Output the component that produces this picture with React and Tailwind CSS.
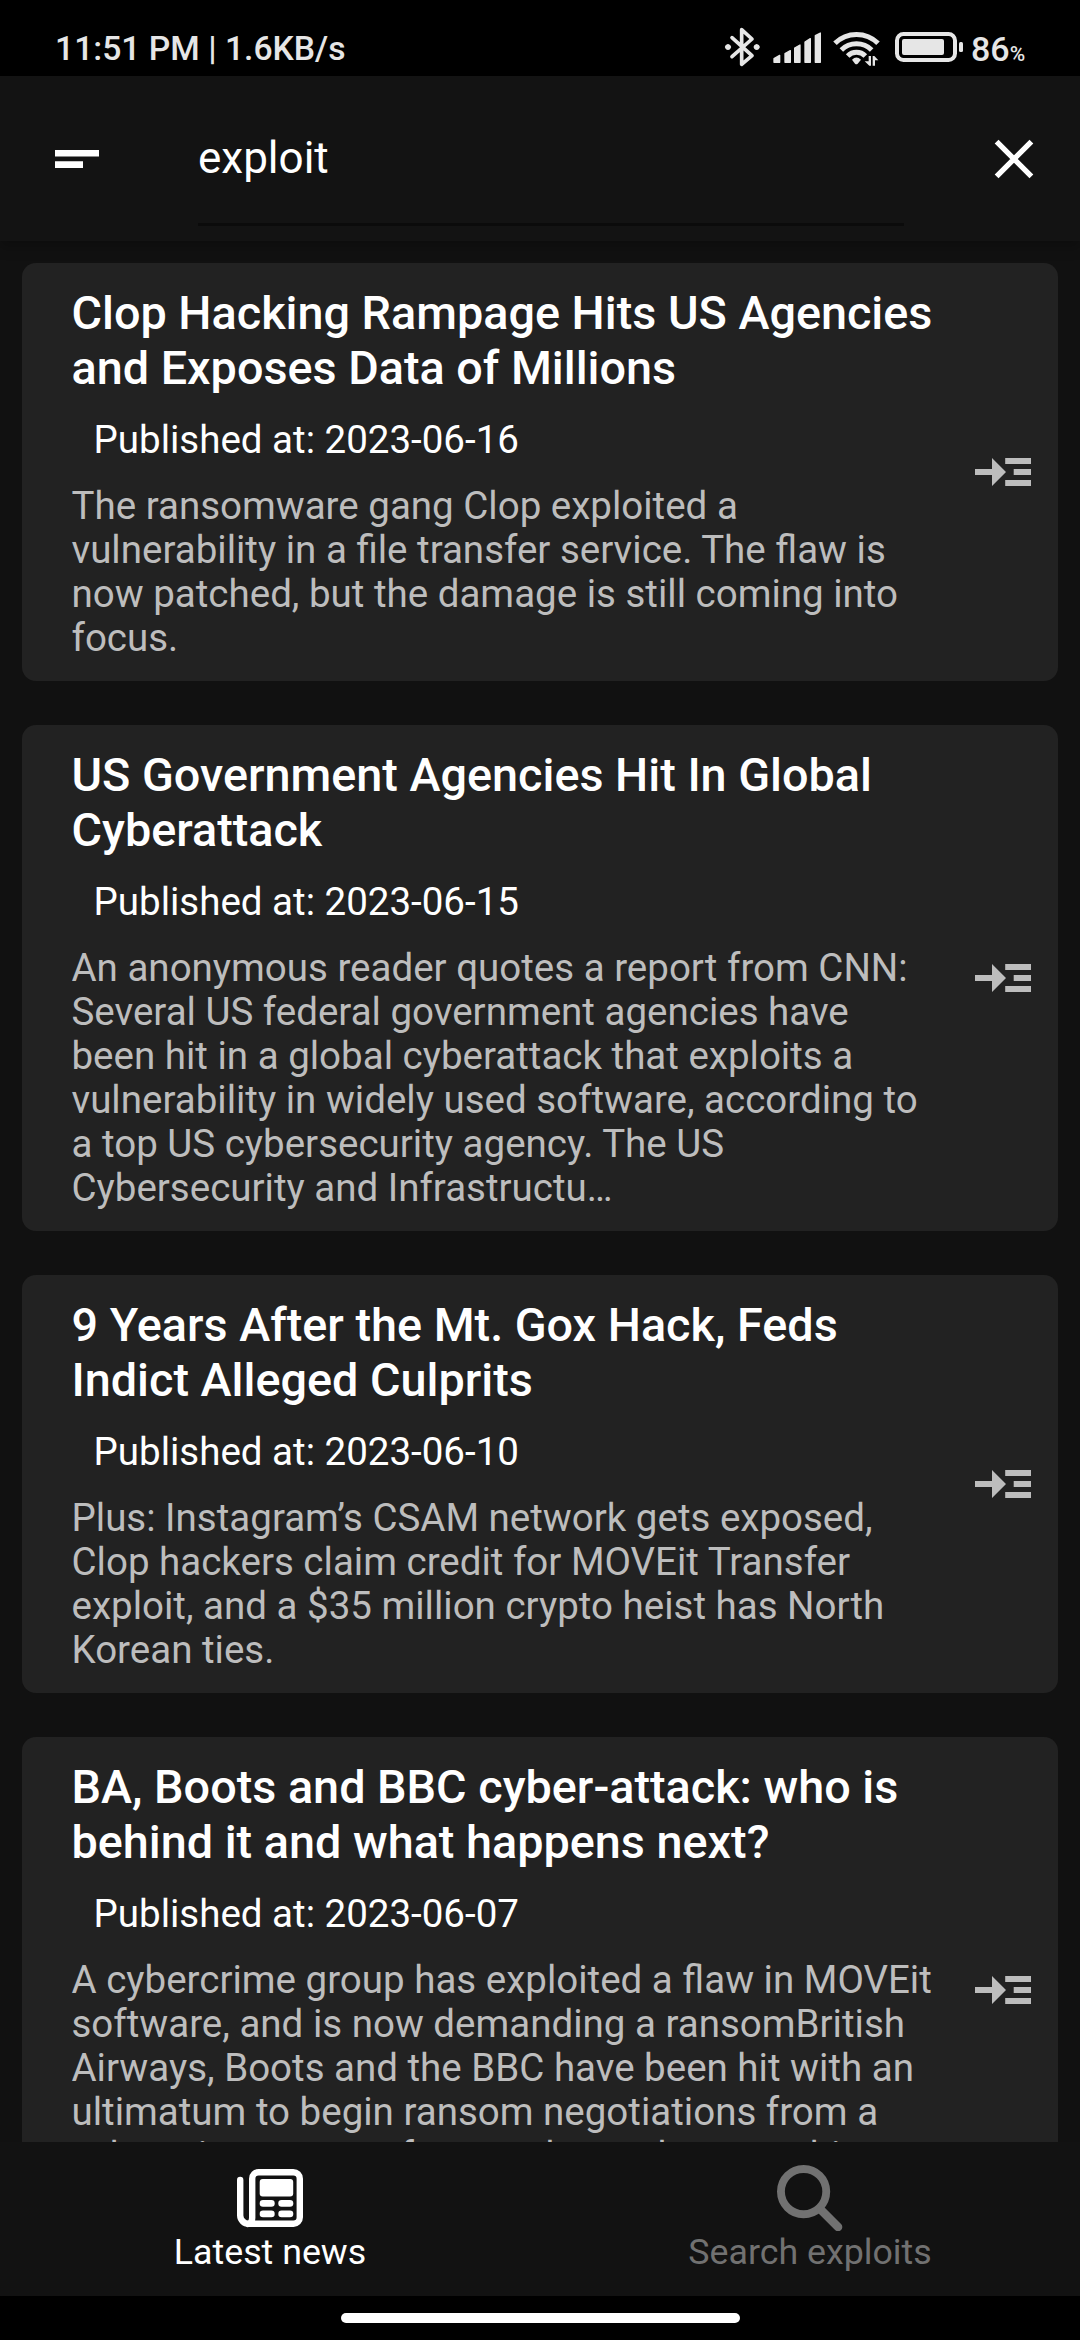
import React from "react";

const articles = [
  {
    title: "Clop Hacking Rampage Hits US Agencies and Exposes Data of Millions",
    date: "2023-06-16",
    body: "The ransomware gang Clop exploited a vulnerability in a file transfer service. The flaw is now patched, but the damage is still coming into focus.",
  },
  {
    title: "US Government Agencies Hit In Global Cyberattack",
    date: "2023-06-15",
    body: "An anonymous reader quotes a report from CNN: Several US federal government agencies have been hit in a global cyberattack that exploits a vulnerability in widely used software, according to a top US cybersecurity agency. The US Cybersecurity and Infrastructu…",
  },
  {
    title: "9 Years After the Mt. Gox Hack, Feds Indict Alleged Culprits",
    date: "2023-06-10",
    body: "Plus: Instagram’s CSAM network gets exposed, Clop hackers claim credit for MOVEit Transfer exploit, and a $35 million crypto heist has North Korean ties.",
  },
  {
    title: "BA, Boots and BBC cyber-attack: who is behind it and what happens next?",
    date: "2023-06-07",
    body: "A cybercrime group has exploited a flaw in MOVEit software, and is now demanding a ransomBritish Airways, Boots and the BBC have been hit with an ultimatum to begin ransom negotiations from a cybercrime group after employee data was hit. Organisations…",
  },
];

function BluetoothIcon() {
  return (
    <svg className="h-10 w-[37px]" viewBox="26 20 111 120" fill="none" stroke="currentColor" strokeWidth="11" strokeLinejoin="round" strokeLinecap="round">
      <path d="M50 52 110 106 79 132V28L110 56 50 109" />
      <path d="M28 80 38 71 48 80 38 89ZM114 80 124 71 134 80 124 89Z" fill="currentColor" stroke="none" />
      <circle cx="38" cy="80" r="8.5" fill="currentColor" stroke="none" />
      <circle cx="124" cy="80" r="8.5" fill="currentColor" stroke="none" />
    </svg>
  );
}

function SignalIcon() {
  return (
    <svg className="h-[31px] w-12" viewBox="174 36 144 93" fill="currentColor" stroke="currentColor" strokeWidth="4" strokeLinejoin="round">
      <path d="M177 116 194 106V127H177ZM210 101 226 92V127H210ZM239 84 255 75V127H239ZM270 66 286 56V127H270ZM301 47 316 39V127H301Z" />
    </svg>
  );
}

function WifiIcon() {
  return (
    <svg className="h-9 w-[47px]" viewBox="355 30 141 108" fill="none" stroke="currentColor" strokeWidth="15">
      <path d="M361 70A92 92 0 0 1 490 70" />
      <path d="M380 90A65 65 0 0 1 471 90" />
      <path d="M399 108A37 37 0 0 1 452 108" />
      <path d="M412 119Q425 106 439 119L429 131Q425 135 421 131Z" fill="currentColor" stroke="none" />
      <path d="M462 108H469V137H464L450 124H462ZM474 108H479L491 121H481V137H474Z" fill="currentColor" stroke="none" />
    </svg>
  );
}

function BatteryIcon() {
  return (
    <svg className="h-[30px] w-[68px]" viewBox="0 0 68 30" fill="currentColor">
      <rect x="2" y="2" width="58" height="26" rx="6.5" fill="none" stroke="currentColor" strokeWidth="4" />
      <rect x="7" y="7" width="42" height="16" rx="2" />
      <rect x="64" y="10" width="4" height="10" rx="1.5" />
    </svg>
  );
}

function ReadMoreIcon() {
  return (
    <svg className="h-7 w-14 shrink-0" viewBox="0 0 56 28" fill="#bdbdbd">
      <path d="M0 11H17V0L31 14 17 28V17H0ZM30.2 0H56V6H30.2ZM38.7 11H56V17H38.7ZM30.2 22H56V28H30.2Z" />
    </svg>
  );
}

function NewsIcon() {
  return (
    <svg className="size-[66px]" viewBox="17 15 66 66" fill="none" stroke="currentColor" strokeWidth="6.4" strokeLinecap="round">
      <path d="M20.2 30V65.5A8.5 8.5 0 0 0 28.7 73.8H73.5A6.5 6.5 0 0 0 79.8 67.3V28.7A6.5 6.5 0 0 0 73.3 22.2H38.7A6.5 6.5 0 0 0 32.2 28.7V68Q32.2 73 28 74" />
      <g fill="currentColor" stroke="none">
        <rect x="39.7" y="29" width="33.5" height="17.4" rx="3" />
        <rect x="39.7" y="50" width="15" height="6.7" rx="3.3" />
        <rect x="58.3" y="50" width="15" height="6.7" rx="3.3" />
        <rect x="39.7" y="60.6" width="15" height="6.7" rx="3.3" />
        <rect x="58.3" y="60.6" width="15" height="6.7" rx="3.3" />
      </g>
    </svg>
  );
}

function SearchIcon() {
  return (
    <svg className="size-[66px]" viewBox="0 0 67 67" fill="none" stroke="currentColor">
      <circle cx="27" cy="27" r="23" strokeWidth="8" />
      <path d="M45 46 62 63" strokeWidth="8.6" strokeLinecap="round" />
    </svg>
  );
}

function ArticleCard({ title, date, body }) {
  return (
    <article className="flex shrink-0 items-center justify-between rounded-[14px] bg-[#222222] pr-[27px] pl-[49.5px]">
      <div className="w-[870px] pt-[23px] pb-[21px]">
        <h2 className="text-[46.75px] leading-[55px] font-medium text-white">{title}</h2>
        <p className="mt-[22px] pl-[22px] text-[38.5px] leading-[44px] text-white">Published at: {date}</p>
        <p className="mt-[22px] text-[38.5px] leading-[44px] text-[#bdbdbd]">{body}</p>
      </div>
      <ReadMoreIcon />
    </article>
  );
}

export default function App() {
  return (
    <div className="flex h-[2340px] w-[1080px] flex-col overflow-hidden bg-[#111111] font-['Roboto',sans-serif]">
      <div className="flex h-[76px] shrink-0 bg-black pl-[55px] text-[#e6e6e6]">
        <span className="w-[669px] pt-[29px] text-[33.7px] leading-[40px] font-medium whitespace-nowrap">11:51 PM | 1.6KB/s</span>
        <div className="flex items-start">
          <div className="pt-[27px]"><BluetoothIcon /></div>
          <div className="ml-[12px] pt-[32px]"><SignalIcon /></div>
          <div className="ml-[12px] pt-[30px]"><WifiIcon /></div>
          <div className="ml-[15px] pt-[32px]"><BatteryIcon /></div>
          <div className="ml-[8px] flex items-baseline pt-[29px] font-medium">
            <span className="text-[34px] leading-[40px]">86</span>
            <span className="text-[21px] leading-[24px]">%</span>
          </div>
        </div>
      </div>

      <header className="z-10 flex h-[165px] shrink-0 items-center bg-[#131313] pr-[46px] pl-[55px] text-white shadow-[0_6px_12px_rgba(0,0,0,0.25)]">
        <svg className="h-[18px] w-11" viewBox="0 0 44 18" fill="currentColor">
          <path d="M0 0H44V6.6H0ZM0 11.3H28V18H0Z" />
        </svg>
        <div className="ml-[99px] h-[135px] w-[706px] self-end">
          <div className="flex h-[120px] items-center border-b-3 border-[#0b0b0b] pb-[14px] text-[44px] leading-[52px]">
            exploit
          </div>
        </div>
        <svg className="ml-auto size-10" viewBox="0 0 40 40" fill="none" stroke="currentColor" strokeWidth="5.4">
          <path d="M2.6 2.6 37.4 37.4M37.4 2.6 2.6 37.4" />
        </svg>
      </header>

      <main className="flex min-h-0 flex-1 flex-col gap-11 overflow-hidden px-[22px] pt-[22px]">
        {articles.map((a) => (
          <ArticleCard key={a.date} {...a} />
        ))}
      </main>

      <nav className="z-10 grid h-[154px] shrink-0 grid-cols-2 bg-[#121212] text-[35.75px] leading-[42px]">
        <div className="flex flex-col items-center pt-[23px] text-white">
          <NewsIcon />
          <span>Latest news</span>
        </div>
        <div className="flex flex-col items-center pt-[23px] text-[#717171]">
          <SearchIcon />
          <span>Search exploits</span>
        </div>
      </nav>
      <div className="flex h-[44px] shrink-0 justify-center bg-black pt-[17px]">
        <div className="h-[10px] w-[399px] rounded-full bg-white" />
      </div>
    </div>
  );
}
